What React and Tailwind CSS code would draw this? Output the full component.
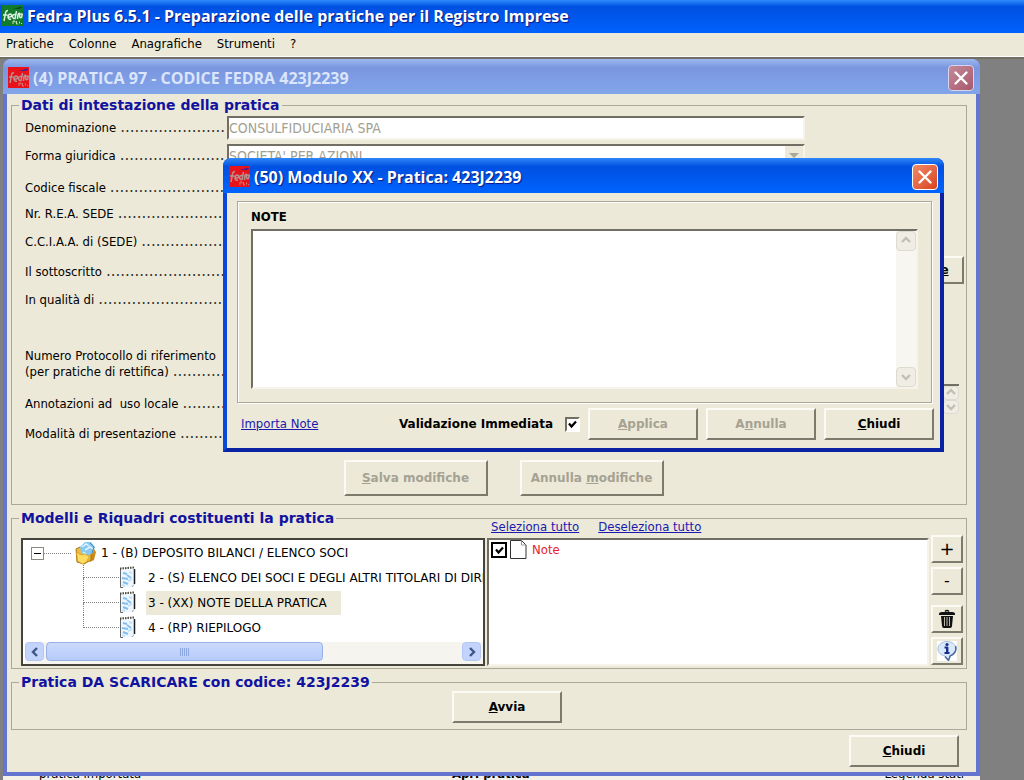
import { useState } from 'react';
import clsx from 'clsx';

const RIGHE = [
  { id: 'denominazione', label: 'Denominazione', gap: 'mt-0.5', value: 'CONSULFIDUCIARIA SPA' },
  { id: 'forma', label: 'Forma giuridica', gap: 'mt-1', tipo: 'select', value: "SOCIETA' PER AZIONI" },
  { id: 'fiscale', label: 'Codice fiscale', gap: 'mt-2' },
  { id: 'rea', label: 'Nr. R.E.A. SEDE', gap: 'mt-0.5' },
  { id: 'cciaa', label: 'C.C.I.A.A. di (SEDE)', gap: 'mt-1' },
  { id: 'sottoscritto', label: 'Il sottoscritto', gap: 'mt-1.5', tipo: 'azione' },
  { id: 'qualita', label: 'In qualità di', gap: 'mt-1' },
  { id: 'protocollo', label: '(per pratiche di rettifica)', sopra: 'Numero Protocollo di riferimento', gap: 'mt-9' },
  { id: 'annotazioni', label: 'Annotazioni ad \u00a0uso locale', gap: 'mt-3', tipo: 'area' },
  { id: 'modalita', label: 'Modalità di presentazione', gap: 'mt-1.5' },
];

const QUADRI = [
  { id: 2, label: '2 - (S) ELENCO DEI SOCI E DEGLI ALTRI TITOLARI DI DIRITTI' },
  { id: 3, label: '3 - (XX) NOTE DELLA PRATICA' },
  { id: 4, label: '4 - (RP) RIEPILOGO' },
];

const PUNTINI = '.'.repeat(40);

export default function App() {
  return (
    <div className="relative flex min-h-screen flex-col overflow-hidden bg-[#808080] font-['DejaVu_Sans_Condensed','DejaVu_Sans',sans-serif] text-[13px] text-black">
      <header className="flex h-[33px] items-center gap-1 bg-linear-to-b from-[#2f8bff] via-[#0050e0] via-20% to-[#0062ff] pb-0.5 pl-0.5">
        <LogoFedra verde />
        <h1 className="whitespace-nowrap font-['Open_Sans',sans-serif] text-base font-bold text-white [text-shadow:1px_1px_1px_#0a1883]">
          Fedra Plus 6.5.1 - Preparazione delle pratiche per il Registro Imprese
        </h1>
      </header>

      <nav className="flex h-6 items-center gap-[15px] border-b border-white bg-[#ece9d8] pb-0.5 pl-1.5">
        {['Pratiche', 'Colonne', 'Anagrafiche', 'Strumenti', '?'].map(voce => (
          <button key={voce} type="button">{voce}</button>
        ))}
      </nav>

      <main className="flex flex-1 flex-col border-t-2 border-[#716f64] pr-11 pl-[3px]">
        <FinestraPratica />
        <div className="flex h-1 items-end justify-between overflow-hidden bg-[#f4f2e8] pr-4 pl-9 leading-3">
          <span>pratica importata</span>
          <span className="mr-11 font-bold">Apri pratica</span>
          <span>Legenda stati</span>
        </div>
      </main>

      <ModuloNote />
    </div>
  );
}

function FinestraPratica() {
  return (
    <section className="flex flex-1 flex-col rounded-t-lg border-x-4 border-b-4 border-[#6475d0] bg-[#ece9d8]">
      <div className="-mx-1 flex h-[35px] shrink-0 items-center gap-1 rounded-t-lg bg-linear-to-b from-[#9db8f0] via-[#7a96df] via-25% to-[#82a5ea] pt-0.5 pr-1.5 pl-[5px]">
        <LogoFedra />
        <h2 className="flex-1 font-['Open_Sans',sans-serif] text-base font-bold text-[#dbe5fb]">
          (4) PRATICA 97 - CODICE FEDRA 423J2239
        </h2>
        <Chiusura spenta />
      </div>

      <div className="pt-0.5 pr-[9px] pl-1">
        <Gruppo titolo="Dati di intestazione della pratica">
          <div className="pl-[13px]">
            {RIGHE.map(riga => <Riga key={riga.id} riga={riga} />)}
          </div>
          <div className="mt-3.5 flex justify-center gap-8 pb-2 pl-[29px]">
            <Bottone disabled className="h-9 w-36"><u>S</u>alva modifiche</Bottone>
            <Bottone disabled className="h-9 w-36">Annulla <u>m</u>odifiche</Bottone>
          </div>
        </Gruppo>

        <Gruppo titolo="Modelli e Riquadri costituenti la pratica" className="mt-1">
          <div className="-mt-2 flex gap-0.5 pr-[3px] pb-0.5 pl-[9px]">
            <Albero />
            <Elenco />
            <div className="flex w-8 flex-col pt-4">
              <Bottone className="h-7" aria-label="Aggiungi"><span className="text-lg font-normal">+</span></Bottone>
              <Bottone className="mt-1 h-7" aria-label="Rimuovi"><span className="text-base font-normal">-</span></Bottone>
              <Bottone className="mt-2.5 h-7" aria-label="Elimina"><Cestino /></Bottone>
              <Bottone className="mt-1 h-7" aria-label="Informazioni"><Info /></Bottone>
            </div>
          </div>
        </Gruppo>

        <Gruppo titolo="Pratica DA SCARICARE con codice: 423J2239" className="mt-1">
          <div className="flex justify-center pb-1.5 pl-9">
            <Bottone className="h-8 w-[110px]"><u>A</u>vvia</Bottone>
          </div>
        </Gruppo>
      </div>

      <div className="flex justify-end pt-[5px] pr-[17px] pb-1">
        <Bottone className="h-8 w-[110px]"><u>C</u>hiudi</Bottone>
      </div>
    </section>
  );
}

function Riga({ riga }) {
  return (
    <div className={clsx('flex', riga.gap)}>
      <div className="w-[202px] shrink-0 pr-[3px]">
        {riga.sopra && <p className="h-4 leading-4">{riga.sopra}</p>}
        <div className={clsx('flex items-center', riga.sopra ? 'h-4' : 'h-6')}>
          <div className="flex w-full items-baseline">
            <label htmlFor={riga.id} className="shrink-0 whitespace-nowrap">{riga.label}</label>
            <span aria-hidden="true" className="ml-1 flex h-4 min-w-0 flex-1 overflow-hidden font-['DejaVu_Sans',sans-serif] text-[15px] leading-4 text-[#333]">
              {PUNTINI}
            </span>
          </div>
        </div>
      </div>
      <Campo riga={riga} />
    </div>
  );
}

function Campo({ riga }) {
  const incavo = 'h-6 w-[578px] border-2 border-t-[#716f64] border-l-[#716f64] border-r-[#f6f4ea] border-b-[#f6f4ea] bg-white text-sm text-[#a3a092]';

  if (riga.tipo === 'select') {
    return (
      <div className="flex">
        <select id={riga.id} disabled className={clsx(incavo, 'appearance-none border-r-[#716f64] leading-5')}>
          <option>{riga.value}</option>
        </select>
        <span className="-ml-5 mt-0.5 flex h-5 w-[18px] items-center justify-center bg-[#ece9d8]">
          <svg width="10" height="6" viewBox="0 0 10 6"><path d="M0 0h10L5 5z" fill="#aca899" /></svg>
        </span>
      </div>
    );
  }
  if (riga.tipo === 'area') {
    return (
      <div className="-my-2 flex h-8 flex-1 justify-end pr-[7px]">
        <textarea id={riga.id} disabled className="flex-1 resize-none border-t-2 border-[#716f64] bg-white" />
        <div className="flex w-4 flex-col border-t-2 border-[#716f64]">
          <Freccia verso="su" className="h-3.5 w-4" />
          <Freccia verso="giu" className="h-3.5 w-4" />
        </div>
      </div>
    );
  }
  return (
    <>
      <input id={riga.id} disabled defaultValue={riga.value} className={incavo} />
      {riga.tipo === 'azione' && (
        <Bottone className="-mt-1 mr-0.5 ml-auto h-7 w-24 pl-[57px]"><u>e</u></Bottone>
      )}
    </>
  );
}

function Albero() {
  const [scelto, setScelto] = useState(3);

  return (
    <div className="mt-[19px] flex h-32 w-[464px] shrink-0 flex-col overflow-hidden border-2 border-[#45443c] bg-white pl-0.5 font-['DejaVu_Sans',sans-serif] text-xs">
      <div className="flex h-[25px] shrink-0 items-center pt-px pl-1.5">
        <button type="button" aria-label="Comprimi" className="flex size-[13px] items-center justify-center border border-[#8a8a80]">
          <span className="h-px w-[7px] bg-black" />
        </button>
        <span className="w-[27px] border-t border-dotted border-[#808080]" />
        <Cartella />
        <span className="ml-1">1 - (B) DEPOSITO BILANCI / ELENCO SOCI</span>
      </div>
      <ul>
        {QUADRI.map((q, i) => (
          <li key={q.id} className="flex h-[25px] items-center pl-[58px]">
            <span className="flex h-full w-9 shrink-0 flex-col">
              <span className="h-[13px] border-b border-l border-dotted border-[#808080]" />
              {i < QUADRI.length - 1 && <span className="flex-1 border-l border-dotted border-[#808080]" />}
            </span>
            <Foglio />
            <button
              type="button"
              onClick={() => setScelto(q.id)}
              className={clsx('ml-2.5 h-6 pr-3.5 pl-0.5 whitespace-nowrap', scelto === q.id && 'bg-[#ece9d8]')}
            >
              {q.label}
            </button>
          </li>
        ))}
      </ul>
      <div className="mt-auto flex h-[22px] shrink-0 items-start bg-[#f5f4ee] pr-0.5">
        <Freccia verso="sinistra" attiva className="h-[19px] w-[19px]" />
        <div className="ml-0.5 flex h-[19px] w-[277px] items-center justify-center gap-px rounded-sm border border-[#98b0e8] bg-linear-to-b from-[#cbdafe] to-[#b7cbfa]">
          {[0, 1, 2, 3, 4].map(n => <span key={n} className="h-2 w-px bg-[#8ca6e0]" />)}
        </div>
        <Freccia verso="destra" attiva className="ml-auto h-[19px] w-[19px]" />
      </div>
    </div>
  );
}

function Elenco() {
  return (
    <div className="flex min-w-0 flex-1 flex-col">
      <div className="flex h-[19px] gap-[19px] pl-1 leading-4">
        <a href="#seleziona" className="text-[#1a1ab0] underline">Seleziona tutto</a>
        <a href="#deseleziona" className="text-[#1a1ab0] underline">Deseleziona tutto</a>
      </div>
      <div className="flex-1 border-2 border-t-[#716f64] border-l-[#716f64] border-r-[#f6f4ea] border-b-[#f6f4ea] bg-white pl-0.5">
        <label className="flex h-5 w-fit items-center text-[#e8202c]">
          <Spunta className="size-4 border-2 border-black" />
          <svg width="19" height="20" viewBox="0 0 19 20" className="ml-0.5">
            <path d="M1.500 .5h11l4.500 4.500v13.500h-15.500z" fill="#fff" stroke="#333" />
            <path d="M12.500 .5v4.500h4.500" fill="none" stroke="#999" />
          </svg>
          <span className="ml-1">Note</span>
        </label>
      </div>
    </div>
  );
}

function ModuloNote() {
  return (
    <section
      role="dialog"
      aria-label="Modulo XX"
      className="absolute top-[158px] left-[223px] w-[721px] rounded-t-lg border-x-4 border-b-4 border-t-[#0a4be0] border-r-[#0a22a4] border-b-[#0a22a4] border-l-[#0a48dc] bg-[#ece9d8]"
    >
      <div className="-mx-1 flex h-[35px] items-center gap-1 rounded-t-lg bg-linear-to-b from-[#2f86f8] via-[#0050e0] via-25% to-[#0064ff] pt-0.5 pr-1.5 pl-1.5">
        <LogoFedra />
        <h2 className="flex-1 font-['Open_Sans',sans-serif] text-base font-bold text-white [text-shadow:1px_1px_1px_#0a1883]">
          (50) Modulo XX - Pratica: 423J2239
        </h2>
        <Chiusura />
      </div>

      <div className="pt-2 pr-2 pb-2 pl-2.5">
        <div className="border border-[#aca899] px-[13px] pt-[7px] pb-[13px] shadow-[inset_1px_1px_0_#fff,1px_1px_0_#fff]">
          <label htmlFor="note" className="block h-5 leading-4 font-bold">NOTE</label>
          <div className="flex h-40 border-2 border-t-[#716f64] border-l-[#716f64] border-r-[#f6f4ea] border-b-[#f6f4ea] bg-white">
            <textarea id="note" className="flex-1 resize-none bg-white outline-none" />
            <div className="flex w-5 flex-col justify-between bg-[#f7f6f0]">
              <Freccia verso="su" className="h-5 w-5" />
              <Freccia verso="giu" className="h-5 w-5" />
            </div>
          </div>
        </div>

        <div className="-mr-0.5 mt-[5px] flex items-center pl-1">
          <a href="#importa" className="text-[#1a1ab0] underline">Importa Note</a>
          <label className="mr-2 ml-auto flex items-center gap-3 font-['DejaVu_Sans',sans-serif] text-xs font-bold">
            Validazione Immediata
            <Spunta className="size-[15px] border-2 border-t-[#716f64] border-l-[#716f64] border-r-white border-b-white" />
          </label>
          <div className="flex gap-2">
            <Bottone disabled className="h-8 w-[110px]"><u>A</u>pplica</Bottone>
            <Bottone disabled className="h-8 w-[110px]">A<u>n</u>nulla</Bottone>
            <Bottone className="h-8 w-[110px]"><u>C</u>hiudi</Bottone>
          </div>
        </div>
      </div>
    </section>
  );
}

function Gruppo({ titolo, className, children }) {
  return (
    <fieldset className={clsx('min-w-0 border border-[#aca899]', className)}>
      <legend className="ml-[7px] h-[18px] px-0.5 font-['DejaVu_Sans',sans-serif] text-sm leading-[18px] font-bold text-[#1212a0]">{titolo}</legend>
      {children}
    </fieldset>
  );
}

function Bottone({ className, children, ...props }) {
  return (
    <button
      type="button"
      className={clsx(
        "flex shrink-0 items-center justify-center border-2 border-t-[#fbfaf4] border-l-[#fbfaf4] border-r-[#7c7a6c] border-b-[#7c7a6c] bg-[#ece9d8] font-['DejaVu_Sans',sans-serif] text-xs font-bold disabled:text-[#a5a293]",
        className,
      )}
      {...props}
    >
      <span>{children}</span>
    </button>
  );
}

function Spunta({ className }) {
  return (
    <span className="relative flex">
      <input type="checkbox" defaultChecked className={clsx('peer appearance-none bg-white', className)} />
      <svg viewBox="0 0 9 9" className="pointer-events-none invisible absolute inset-0 m-auto size-[9px] peer-checked:visible">
        <path d="M1 3.500 3.500 6.500 8 1.500" fill="none" stroke="#000" strokeWidth="2.200" />
      </svg>
    </span>
  );
}

function Chiusura({ spenta }) {
  return (
    <button
      type="button"
      aria-label="Chiudi finestra"
      className={clsx(
        'flex size-[26px] items-center justify-center rounded border',
        spenta ? 'border-[#d8d4ea] bg-linear-to-br from-[#c48a9a] to-[#a8586c]' : 'border-white bg-linear-to-br from-[#f08a68] to-[#d8401a]',
      )}
    >
      <svg width="16" height="16" viewBox="0 0 16 16">
        <path d="M2.500 2.500l11 11M13.500 2.500l-11 11" stroke="#fff" strokeWidth="2.400" strokeLinecap="round" />
      </svg>
    </button>
  );
}

const PUNTE = {
  su: 'M2 7l4-4 4 4',
  giu: 'M2 4l4 4 4-4',
  sinistra: 'M8 2L4 6l4 4',
  destra: 'M4 2l4 4-4 4',
};

function Freccia({ verso, attiva, className }) {
  return (
    <button
      type="button"
      aria-label={`Scorri ${verso}`}
      className={clsx(
        'flex shrink-0 items-center justify-center rounded-sm border',
        attiva ? 'border-[#b4c6f4] bg-[#c3d4fc]' : 'border-[#dddbcf] bg-[#f0eee4]',
        className,
      )}
    >
      <svg width="12" height="12" viewBox="0 0 12 12">
        <path d={PUNTE[verso]} fill="none" stroke={attiva ? '#3f5488' : '#c2c0b4'} strokeWidth="2.400" />
      </svg>
    </button>
  );
}

function LogoFedra({ verde }) {
  return (
    <svg width="21" height="21" viewBox="0 0 21 21" className="shrink-0">
      <rect width="21" height="21" fill={verde ? '#127a2c' : '#e8121a'} />
      <path d="M11 4l8-2.500 1 1.500-3 1z" fill={verde ? '#0a4a1c' : '#4a1c98'} />
      <path
        d="M2 16l1.500-8q.5-2.500 2.500-2.500M1 10h4.500M6 12.500l3.500-1q.5-2.500-1.500-2.500-2 .5-2 3.500 1 2.500 3 1.500M14.500 6l-1.500 8M13.500 9.500q-3-.5-3 2.500 1 2.500 3 1M15.500 14l.500-4.500q1-1.500 2-1M20 9q-2.500-.5-2.500 2 .5 2.500 2 1.500l1-4"
        fill="none"
        stroke={verde ? '#dcefe0' : '#b89090'}
        strokeWidth="1.500"
      />
      <path d="M11 19v-3h2v1.500M14.500 16v3h1.500M17.500 16.500v2M19 18.500h1" fill="none" stroke={verde ? '#c4dfb0' : '#d87878'} />
    </svg>
  );
}

function Cartella() {
  return (
    <svg width="22" height="24" viewBox="0 0 22 24" className="ml-1 shrink-0">
      <path d="M13 8l6 0 2 3-2 8-4 2z" fill="#c98a1c" />
      <path d="M1 8l4-2 3 3 8 1v9l-7 4-7-2z" fill="#f0bc38" stroke="#a8741a" />
      <path d="M5 6l5-5 6 0 4 5-2 6-6 3-6-3z" fill="#86c8ee" />
      <path d="M7 6l4-3 3 2M10 9l5-3 3 2M8 11l3 2" fill="none" stroke="#e2f4ff" strokeWidth="1.500" />
      <path d="M15 2l4 4-2 6" fill="none" stroke="#3f88bc" />
      <path d="M1.500 11l5 3 3-1 5 2-3 6-4 2-5-3z" fill="#fddc62" stroke="#d09a24" strokeWidth=".8" />
    </svg>
  );
}

function Foglio() {
  return (
    <svg width="17" height="23" viewBox="0 0 17 23" className="shrink-0">
      <path d="M1 3l14-1v19L1 22z" fill="#eef7ff" />
      <path d="M1.500 3v18.500h2.500" stroke="#666" fill="none" />
      <path d="M15.500 3v15" stroke="#1c1c1c" strokeWidth="1.500" />
      <path d="M1 2.500l14-1" stroke="#4a4638" strokeWidth="2" strokeDasharray="1.500 1" />
      <path d="M15 18.500l-2 2.500" stroke="#9aa" />
      <path d="M4 7l4 1M8 9l4 3M3 12l6 1M4 16l5 2" stroke="#82bff0" strokeWidth="2" />
      <path d="M10 6l3 1M9 15l4-2M3 19l3 1" stroke="#c2e2fa" strokeWidth="2" />
    </svg>
  );
}

function Cestino() {
  return (
    <svg width="18" height="20" viewBox="0 0 18 20">
      <path d="M7 2.500q2-2 4 0" fill="none" stroke="#111" strokeWidth="1.500" />
      <path d="M1 5q0-2 3-2h10q3 0 3 2v1H1z" fill="#111" />
      <path d="M3 7h12l-1 10q0 2-2 2H6q-2 0-2-2z" fill="#111" />
      <path d="M6.500 8v9M9 8v9M11.500 8v9" stroke="#b8b6aa" />
    </svg>
  );
}

function Info() {
  return (
    <svg width="20" height="20" viewBox="0 0 20 20">
      <rect width="20" height="20" fill="#fff" />
      <path d="M10 .5c5 0 9 3 9 7.500 0 4-3 6-5.500 7L11.500 19.500 8 15C4 14 1 12 1 8 1 3.500 5 .5 10 .5z" fill="#d9e8fa" stroke="#a4bee4" />
      <path d="M18.500 5c1.500 5-2 9-5.500 10l-1.500 4.500L8 15.500" fill="none" stroke="#4a6a9c" strokeWidth="1.500" />
      <circle cx="10" cy="3.500" r="1.600" fill="#16308c" />
      <path d="M7.500 6.500h2.500v5.500M7.500 12h5" fill="none" stroke="#16308c" strokeWidth="1.800" />
      <path d="M10.200 6v6" stroke="#16308c" strokeWidth="2.400" />
    </svg>
  );
}
